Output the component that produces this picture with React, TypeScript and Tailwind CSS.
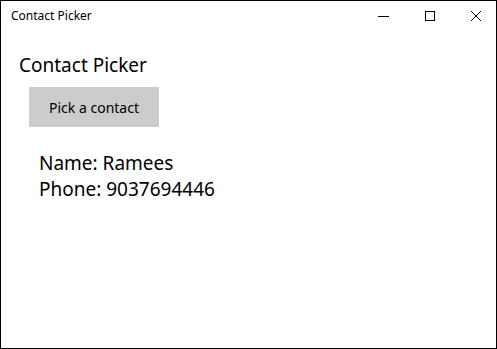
export default function App() {
  return (
    <div
      className="w-[497px] h-[349px] border border-black bg-white flex flex-col text-black"
      style={{ fontFamily: '"Noto Sans", "Open Sans", sans-serif' }}
    >
      <div className="h-[29px] flex items-center shrink-0">
        <span className="pl-[10px] text-[12px] flex-1">Contact Picker</span>
        <div className="flex items-center gap-[36px] pr-[15px]">
          <svg width="11" height="10" viewBox="0 0 11 10">
            <path d="M0 5.5h11" stroke="#000" strokeWidth="1" />
          </svg>
          <svg width="10" height="10" viewBox="0 0 10 10">
            <rect x="0.5" y="0.5" width="9" height="9" fill="none" stroke="#000" strokeWidth="1" />
          </svg>
          <svg width="10" height="10" viewBox="0 0 10 10">
            <path d="M0 0L10 10M10 0L0 10" stroke="#000" strokeWidth="1" />
          </svg>
        </div>
      </div>
      <div className="pl-[18px] pt-[22px]">
        <h1 className="text-[19px] leading-[26px]">Contact Picker</h1>
        <button className="ml-[10px] mt-[9px] w-[130px] h-[40px] bg-[#cccccc] text-[14px]">
          Pick a contact
        </button>
        <div className="ml-[20px] mt-[23px] text-[19px] leading-[26px]">
          <p>Name: Ramees</p>
          <p>Phone: 9037694446</p>
        </div>
      </div>
    </div>
  );
}
